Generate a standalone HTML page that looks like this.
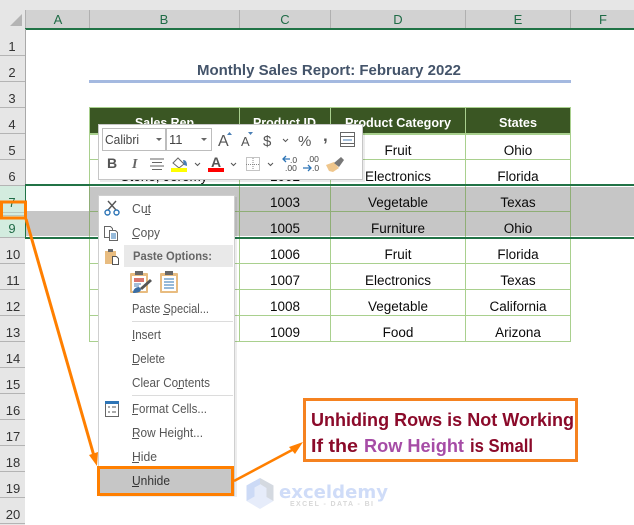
<!DOCTYPE html>
<html><head><meta charset="utf-8"><style>
html,body{margin:0;padding:0;background:#fff;width:634px;height:525px;overflow:hidden}
svg{display:block;font-family:"Liberation Sans",sans-serif}
.h{font-size:13px;fill:#1f6b46;text-anchor:middle}
.b{font-size:13.5px;fill:#0a0a0a;text-anchor:middle}
.w{font-size:13px;font-weight:bold;fill:#fff}
.m{font-size:12.5px;fill:#555}
</style></head><body>
<svg width="634" height="525" viewBox="0 0 634 525" xmlns="http://www.w3.org/2000/svg">
<rect width="634" height="525" fill="#fff"/>
<rect width="634" height="10" fill="#e6e6e6"/>
<rect y="10" width="634" height="18" fill="#d2d2d2"/>
<rect y="10" width="25" height="19" fill="#e6e6e6"/>
<rect y="29" width="25" height="496" fill="#e6e6e6"/>
<path d="M22 14V26H10Z" fill="#b4b4b4"/>
<g fill="#b0b0b0"><rect x="25" y="10" width="1" height="18"/><rect x="89" y="10" width="1" height="18"/><rect x="239" y="10" width="1" height="18"/><rect x="330" y="10" width="1" height="18"/><rect x="465" y="10" width="1" height="18"/><rect x="570" y="10" width="1" height="18"/></g>
<text class="h" x="58" y="24">A</text><text class="h" x="164" y="24">B</text><text class="h" x="285" y="24">C</text><text class="h" x="398" y="24">D</text><text class="h" x="518" y="24">E</text><text class="h" x="603" y="24">F</text>
<rect x="25" y="28" width="609" height="2" fill="#217346"/>
<rect x="25" y="29" width="1" height="156" fill="#a9a9a9"/>
<g fill="#b4b4b4"><rect y="55" width="25" height="1"/><rect y="81" width="25" height="1"/><rect y="107" width="25" height="1"/><rect y="133" width="25" height="1"/><rect y="159" width="25" height="1"/><rect y="185" width="25" height="1"/><rect y="237" width="25" height="1"/><rect y="263" width="25" height="1"/><rect y="289" width="25" height="1"/><rect y="315" width="25" height="1"/><rect y="341" width="25" height="1"/><rect y="367" width="25" height="1"/><rect y="393" width="25" height="1"/><rect y="419" width="25" height="1"/><rect y="445" width="25" height="1"/><rect y="471" width="25" height="1"/><rect y="497" width="25" height="1"/><rect y="523" width="25" height="1"/></g>
<rect y="186" width="25" height="51" fill="#d3ecdf"/>
<rect y="212" width="25" height="1" fill="#b8c8be"/><rect y="215" width="25" height="1" fill="#b8c8be"/>
<g font-size="13" fill="#333" text-anchor="middle"><text x="12" y="51">1</text><text x="12" y="77">2</text><text x="12" y="103">3</text><text x="12" y="129">4</text><text x="12" y="155">5</text><text x="12" y="181">6</text><text x="12" y="207" fill="#1f6b46">7</text><text x="12" y="233" fill="#1f6b46">9</text><text x="13" y="259">10</text><text x="13" y="285">11</text><text x="13" y="311">12</text><text x="13" y="337">13</text><text x="13" y="363">14</text><text x="13" y="389">15</text><text x="13" y="415">16</text><text x="13" y="441">17</text><text x="13" y="467">18</text><text x="13" y="493">19</text><text x="13" y="519">20</text></g>
<text x="197" y="75" font-size="15" font-weight="bold" fill="#44546a" textLength="264" lengthAdjust="spacingAndGlyphs">Monthly Sales Report: February 2022</text>
<rect x="89" y="80" width="482" height="3" fill="#a4b9e0"/>
<rect x="89" y="187" width="545" height="49" fill="#c6c6c6"/>
<rect x="26" y="211" width="63" height="25" fill="#c6c6c6"/>
<rect x="89" y="108" width="481" height="25" fill="#3a5623"/>
<g fill="#a9d08e"><rect x="89" y="107" width="482" height="1"/><rect x="89" y="133" width="482" height="2"/><rect x="89" y="159" width="482" height="1"/><rect x="89" y="263" width="482" height="1"/><rect x="89" y="289" width="482" height="1"/><rect x="89" y="315" width="482" height="1"/><rect x="89" y="341" width="482" height="1"/>
<rect x="89" y="107" width="1" height="235"/><rect x="239" y="107" width="1" height="235"/><rect x="330" y="107" width="1" height="235"/><rect x="465" y="107" width="1" height="235"/><rect x="570" y="107" width="1" height="235"/></g>
<g fill="#8fae76"><rect x="89" y="187" width="1" height="49"/><rect x="239" y="187" width="1" height="49"/><rect x="330" y="187" width="1" height="49"/><rect x="465" y="187" width="1" height="49"/><rect x="570" y="187" width="1" height="49"/><rect x="89" y="211" width="481" height="1"/></g>
<text class="w" x="135" y="127" textLength="59" lengthAdjust="spacingAndGlyphs">Sales Rep</text>
<text class="w" x="253" y="127" textLength="63" lengthAdjust="spacingAndGlyphs">Product ID</text>
<text class="w" x="345" y="127" textLength="106" lengthAdjust="spacingAndGlyphs">Product Category</text>
<text class="w" x="499" y="127" textLength="38" lengthAdjust="spacingAndGlyphs">States</text>
<g>
<text class="b" x="398" y="155">Fruit</text><text class="b" x="518" y="155">Ohio</text>
<text class="b" x="398" y="181" textLength="66" lengthAdjust="spacingAndGlyphs">Electronics</text><text class="b" x="518" y="181">Florida</text>
<text class="b" x="164" y="181">Stone, Jeremy</text><text class="b" x="285" y="181">1002</text>
<text class="b" x="285" y="207">1003</text><text class="b" x="398" y="207">Vegetable</text><text class="b" x="518" y="207">Texas</text>
<text class="b" x="285" y="233">1005</text><text class="b" x="398" y="233">Furniture</text><text class="b" x="518" y="233">Ohio</text>
<text class="b" x="285" y="259">1006</text><text class="b" x="398" y="259">Fruit</text><text class="b" x="518" y="259">Florida</text>
<text class="b" x="285" y="285">1007</text><text class="b" x="398" y="285" textLength="66" lengthAdjust="spacingAndGlyphs">Electronics</text><text class="b" x="518" y="285">Texas</text>
<text class="b" x="285" y="311">1008</text><text class="b" x="398" y="311">Vegetable</text><text class="b" x="518" y="311">California</text>
<text class="b" x="285" y="337">1009</text><text class="b" x="398" y="337">Food</text><text class="b" x="518" y="337">Arizona</text>
</g>
<rect x="25" y="184" width="609" height="2" fill="#217346"/>
<rect x="25" y="237" width="609" height="2" fill="#217346"/>
<rect x="25" y="184" width="1" height="55" fill="#217346"/>

<!-- mini toolbar -->
<rect x="100" y="126" width="265" height="56" fill="#000" opacity=".08"/>
<rect x="98.5" y="124.5" width="264" height="55" fill="#fff" stroke="#c6c6c6"/>
<rect x="102.5" y="128.5" width="63" height="22" fill="#fff" stroke="#bdbdbd"/>
<rect x="166.5" y="128.5" width="45" height="22" fill="#fff" stroke="#bdbdbd"/>
<text x="105" y="144" font-size="13" fill="#444" textLength="34" lengthAdjust="spacingAndGlyphs">Calibri</text>
<text x="169" y="144" font-size="13" fill="#444">11</text>
<path d="M156 138h6l-3 3zM201 138h6l-3 3z" fill="#666"/>
<text x="218" y="146" font-size="16" fill="#555">A</text><path d="M227 135h5l-2.500-3z" fill="#4a7fb5"/>
<text x="241" y="146" font-size="13" fill="#555">A</text><path d="M248 132h5l-2.500 3z" fill="#4a7fb5"/>
<text x="263" y="146" font-size="15" fill="#555">$</text>
<path d="M283 139l2.500 2.500 2.500-2.500" fill="none" stroke="#555"/>
<text x="298" y="146" font-size="15" fill="#555">%</text>
<text x="323" y="141" font-size="17" font-weight="bold" fill="#555">,</text>
<g fill="none" stroke="#666"><rect x="340.500" y="132.500" width="14" height="14"/><path d="M341 136.500h13M341 143.500h13"/></g>
<path d="M343 140h9" stroke="#4a7fb5"/>
<text x="107" y="168" font-size="14" font-weight="bold" fill="#555">B</text>
<text x="132" y="168" font-size="14" font-weight="bold" font-style="italic" fill="#666" font-family="Liberation Serif">I</text>
<path d="M150 159h14M152 162.500h10M150 166h14M152 169.500h10" stroke="#666"/>
<path d="M173 163l5-5 6 6-5 4z" fill="#fff" stroke="#666"/><path d="M183 160c3 0 4 2 4 6l-3-1z" fill="#4a7fb5"/>
<rect x="171" y="168" width="16" height="4" fill="#ffff00"/>
<path d="M195 163l2.500 2.500 2.500-2.500M231 163l2.500 2.500 2.500-2.500M268 163l2.500 2.500 2.500-2.500" fill="none" stroke="#555"/>
<text x="216" y="167" font-size="14" font-weight="bold" fill="#555" text-anchor="middle">A</text>
<rect x="208" y="168" width="16" height="4" fill="#ff0000"/>
<rect x="246.500" y="157.500" width="13" height="13" fill="none" stroke="#888" stroke-dasharray="1 1"/><path d="M253 158v13M246 164.500h14" stroke="#888" stroke-dasharray="1 1"/>
<path d="M290 159h-7m3-3l-3 3 3 3" fill="none" stroke="#2e75b6" stroke-width="1.300"/>
<text x="290" y="163" font-size="8.500" fill="#444">.0</text><text x="285" y="171" font-size="8.500" fill="#444">.00</text>
<text x="307" y="162" font-size="8.500" fill="#444">.00</text><text x="312" y="171" font-size="8.500" fill="#444">.0</text>
<path d="M303 168h8m-3-3l3 3-3 3" fill="none" stroke="#2e75b6" stroke-width="1.300"/>
<path d="M326 165l8-3 5 6-6 4-4-1z" fill="#efc68c"/><path d="M334 163l7-6 3 3-5 7z" fill="#777"/>

<!-- context menu -->
<rect x="100" y="197" width="137" height="300" fill="#000" opacity=".07"/>
<rect x="98.500" y="195.500" width="136" height="300" fill="#fff" stroke="#cfcfcf"/>
<g fill="none" stroke="#555" stroke-width="1.400"><path d="M108 201l8 9M116 201l-8 9"/></g>
<g fill="none" stroke="#2e75b6" stroke-width="1.400"><circle cx="107.500" cy="212.500" r="2.500"/><circle cx="116.500" cy="212.500" r="2.500"/></g>
<text class="m" x="132" y="213" textLength="19" lengthAdjust="spacingAndGlyphs">Cut</text><rect x="145" y="214" width="5" height="1" fill="#555"/>
<path d="M104.500 226.500h6l2 2v9h-8z" fill="#fff" stroke="#666"/><path d="M109.500 230.500h6l2 2v8h-8z" fill="#fff" stroke="#666"/><path d="M111 234h5M111 236h5M111 238h5" stroke="#2e75b6"/>
<text class="m" x="132" y="237" textLength="28" lengthAdjust="spacingAndGlyphs">Copy</text><rect x="132" y="238" width="7" height="1" fill="#555"/>
<rect x="124" y="245" width="109" height="22" fill="#e9e9e9"/>
<text x="133" y="260" font-size="12" font-weight="bold" fill="#666" textLength="79" lengthAdjust="spacingAndGlyphs">Paste Options:</text>
<rect x="105" y="251" width="11" height="13" fill="#e8bc80"/><rect x="108" y="249" width="5" height="3" fill="#666"/><path d="M112.500 256.500h4l2 2v6h-6z" fill="#fff" stroke="#555"/>
<rect x="130" y="273" width="18" height="20" rx="1" fill="#e8bc80"/><rect x="132" y="276" width="14" height="15" fill="#fff"/><rect x="135" y="271" width="8" height="4" fill="#666"/><rect x="134" y="278" width="10" height="4" fill="#d9766f"/><path d="M134 284h7M134 286h5" stroke="#4a7fb5"/><path d="M133 293c0-4 3-6 6-6l2 2c0 3-3 4-8 4z" fill="#3a6ea5"/><path d="M140 288l10-9 2 2-10 9z" fill="#555"/>
<rect x="160" y="273" width="18" height="20" rx="1" fill="#e8bc80"/><rect x="162" y="276" width="14" height="15" fill="#fff"/><rect x="165" y="271" width="8" height="4" fill="#666"/><path d="M164 279h10M164 282h10M164 285h10M164 288h10" stroke="#2e75b6"/>
<text class="m" x="132" y="313" textLength="77" lengthAdjust="spacingAndGlyphs">Paste Special...</text><rect x="163" y="314" width="6" height="1" fill="#555"/>
<rect x="132" y="321" width="101" height="1" fill="#dcdcdc"/>
<text class="m" x="132" y="339" textLength="29" lengthAdjust="spacingAndGlyphs">Insert</text><rect x="132" y="340" width="3" height="1" fill="#555"/>
<text class="m" x="132" y="363" textLength="33" lengthAdjust="spacingAndGlyphs">Delete</text><rect x="132" y="364" width="7" height="1" fill="#555"/>
<text class="m" x="132" y="387" textLength="78" lengthAdjust="spacingAndGlyphs">Clear Contents</text><rect x="177" y="388" width="6" height="1" fill="#555"/>
<rect x="132" y="395" width="101" height="1" fill="#dcdcdc"/>
<rect x="105.500" y="402.500" width="13" height="14" fill="#fff" stroke="#666"/><rect x="105" y="401" width="14" height="3" fill="#2e75b6"/><path d="M108 407h2M112 407h4M108 412h2M112 412h4" stroke="#555"/>
<text class="m" x="132" y="413" textLength="75" lengthAdjust="spacingAndGlyphs">Format Cells...</text><rect x="132" y="414" width="6" height="1" fill="#555"/>
<text class="m" x="132" y="437" textLength="71" lengthAdjust="spacingAndGlyphs">Row Height...</text><rect x="132" y="438" width="7" height="1" fill="#555"/>
<text class="m" x="132" y="461" textLength="25" lengthAdjust="spacingAndGlyphs">Hide</text><rect x="132" y="462" width="7" height="1" fill="#555"/>
<rect x="98.500" y="467.500" width="134" height="27" fill="#c6c6c6" stroke="#ff7f00" stroke-width="3"/>
<text x="132" y="485" font-size="12.500" fill="#333" textLength="38" lengthAdjust="spacingAndGlyphs">Unhide</text><rect x="132" y="486" width="7" height="1" fill="#333"/>

<!-- orange -->
<rect x="1.500" y="202" width="24" height="16" fill="none" stroke="#ff7f00" stroke-width="3"/>
<path d="M26 219L94 456" stroke="#ff7f00" stroke-width="3" fill="none"/>
<path d="M97 466l-8-11 9-3z" fill="#ff7f00"/>
<path d="M234 481L294 449" stroke="#ff7f00" stroke-width="2.500" fill="none"/>
<path d="M303 442l-14 5 6 7z" fill="#ff7f00"/>

<!-- callout -->
<rect x="304.500" y="399.500" width="272" height="61" fill="#fff" stroke="#f58220" stroke-width="3"/>
<text x="311" y="426" font-size="18" font-weight="bold" fill="#8b0a2a" textLength="263" lengthAdjust="spacingAndGlyphs">Unhiding Rows is Not Working</text>
<text x="311" y="452" font-size="18" font-weight="bold" fill="#8b0a2a" textLength="47" lengthAdjust="spacingAndGlyphs">If the</text>
<text x="364" y="452" font-size="18" font-weight="bold" fill="#a64ca6" textLength="100" lengthAdjust="spacingAndGlyphs">Row Height</text>
<text x="470" y="452" font-size="18" font-weight="bold" fill="#8b0a2a" textLength="63" lengthAdjust="spacingAndGlyphs">is Small</text>

<!-- watermark -->
<path d="M260 478l13.500 7.500v15.500l-13.500 8-13.500-8v-15.500z" fill="#e6ecfa"/><path d="M260 478l-13.500 7.500v15.500l8-4.500v-9l5.500-3z" fill="#ccdaf6"/><path d="M260 478l13.500 7.500v15.500l-7-4v-9l-6.500-4z" fill="#d4d9e0"/>
<text x="279" y="498" font-size="18" font-weight="bold" fill="#cfdcf8" font-family="DejaVu Sans" textLength="109" lengthAdjust="spacingAndGlyphs">exceldemy</text>
<text x="290" y="506" font-size="7" font-weight="bold" fill="#d8d8d8" textLength="83" lengthAdjust="spacing">EXCEL - DATA - BI</text>
</svg>
</body></html>
